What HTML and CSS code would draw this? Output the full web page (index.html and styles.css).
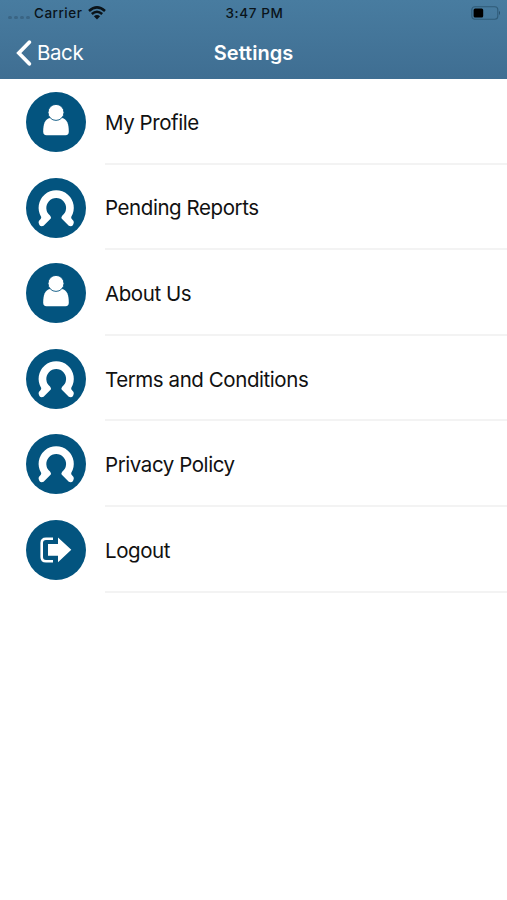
FILE: index.html
```html
<!DOCTYPE html>
<html lang="en">
<head>
    <meta charset="UTF-8">
    <meta name="viewport" content="width=device-width, initial-scale=1.0">
    <title>Settings</title>
    <link rel="stylesheet" href="styles.css">
</head>
<body>
    <svg class="sprite">
        <symbol id="user" viewBox="0 0 60 60">
            <path d="M24 26C19 27 17.2 32 17.2 39.5C17.2 42.2 18.2 43.2 20.5 43.2H39.5C41.8 43.2 42.8 42.2 42.8 39.5C42.8 32 41 27 36 26Z" fill="#fff"/>
            <circle cx="30" cy="20.4" r="8" fill="#fff" stroke="#03547f" stroke-width="0.9"/>
        </symbol>
        <symbol id="outline" viewBox="0 0 60 60">
            <path d="M15.2 39A17.6 17.6 0 1 1 45.2 39Q45 40.4 46 41.2Q48.2 42.8 47.8 44.8L47 47Q46.2 48.2 44.6 48.2L42.8 47.8L35.6 40.6Q34.8 39.4 36.4 37.6A9.9 9.9 0 1 0 24 37.6Q25.6 39.4 24.8 40.6L17.6 47.8L15.8 48.2Q14.2 48.2 13.4 47L12.6 44.8Q12.2 42.8 14.4 41.2Q15.4 40.4 15.2 39Z" fill="#fff"/>
        </symbol>
        <symbol id="logout" viewBox="0 0 60 60">
            <path d="M27 18.8H20Q15.7 18.8 15.7 23V37Q15.7 41.3 20 41.3H27" fill="none" stroke="#fff" stroke-width="2.6"/>
            <path d="M22 24H32V17.5L45.3 29.7L32 42.2V35.8H22Z" fill="#fff"/>
        </symbol>
    </svg>
    <header class="header">
        <div class="status">
            <div class="carrier">
                <span class="dots"><i></i><i></i><i></i><i></i></span>
                <span class="carrier-name">Carrier</span>
                <svg class="wifi" viewBox="0 0 18 14">
                    <path d="M1 5Q9 -2.2 17 5M3.8 8Q9 3.4 14.2 8" fill="none" stroke="#0a1319" stroke-width="2.5"/>
                    <path d="M5.9 10.3Q9 7.6 12.1 10.3L9 13.5Z" fill="#0a1319"/>
                </svg>
            </div>
            <span class="time">3:47 PM</span>
            <svg class="battery" viewBox="0 0 30 14">
                <rect x="0.8" y="0.8" width="26" height="12.4" rx="3" fill="none" stroke="#2f5b78" stroke-width="1.1"/>
                <rect x="2.6" y="2.4" width="9.6" height="9.2" rx="1.5" fill="#000"/>
                <path d="M28 4.8Q30 7 28 9.2Z" fill="#274f6a"/>
            </svg>
        </div>
        <div class="navbar">
            <a class="back">
                <svg class="chevron" viewBox="0 0 16 26">
                    <path d="M13.3 2.2L2.8 13L13.3 23.8" fill="none" stroke="#fff" stroke-width="3.7" stroke-linecap="round"/>
                </svg>
                <span class="back-text">Back</span>
            </a>
            <h1 class="title">Settings</h1>
        </div>
    </header>
    <ul class="list">
        <li class="item">
            <svg class="icon"><use href="#user"/></svg>
            <div class="label">My Profile</div>
        </li>
        <li class="item">
            <svg class="icon"><use href="#outline"/></svg>
            <div class="label">Pending Reports</div>
        </li>
        <li class="item">
            <svg class="icon"><use href="#user"/></svg>
            <div class="label">About Us</div>
        </li>
        <li class="item">
            <svg class="icon"><use href="#outline"/></svg>
            <div class="label">Terms and Conditions</div>
        </li>
        <li class="item">
            <svg class="icon"><use href="#outline"/></svg>
            <div class="label">Privacy Policy</div>
        </li>
        <li class="item">
            <svg class="icon"><use href="#logout"/></svg>
            <div class="label">Logout</div>
        </li>
    </ul>
</body>
</html>
```
FILE: styles.css
```css
body {
    margin: 0;
    background: #fff;
    font-family: Inter, "Liberation Sans", sans-serif;
    color: #111;
}
.sprite {
    display: none;
}
.header {
    height: 79px;
    background: linear-gradient(#487ca0, #3f6e92);
}
.status {
    display: grid;
    grid-template-columns: 1fr auto 1fr;
    align-items: center;
    height: 26px;
    padding: 0 6px 0 8px;
    font-size: 13.5px;
    font-weight: 500;
    color: #0a1319;
}
.carrier {
    display: flex;
    align-items: center;
}
.dots {
    display: flex;
    gap: 2px;
    width: 26px;
    padding-top: 8px;
}
.dots i {
    width: 4px;
    height: 3px;
    border-radius: 2px;
    background: #3a6584;
}
.carrier-name {
    letter-spacing: 0.5px;
}
.time {
    letter-spacing: 0.6px;
}
.wifi {
    width: 18px;
    height: 14px;
    margin-left: 6px;
}
.battery {
    width: 30px;
    height: 14px;
    justify-self: end;
}
.navbar {
    display: grid;
    grid-template-columns: 1fr auto 1fr;
    align-items: center;
    height: 53px;
    padding: 0 16px;
    color: #fff;
}
.back {
    display: flex;
    align-items: center;
    gap: 5px;
    font-size: 20.5px;
    letter-spacing: -0.4px;
}
.chevron {
    width: 16px;
    height: 26px;
}
.title {
    margin: 0;
    font-size: 20px;
    font-weight: 600;
}
.list {
    margin: 0;
    padding: 0;
    list-style: none;
}
.item {
    display: flex;
    height: 85.6px;
    padding-left: 26px;
}
.icon {
    width: 60px;
    height: 60px;
    margin: 13px 19px 0 0;
    border-radius: 50%;
    background: #03547f;
    flex-shrink: 0;
}
.label {
    display: flex;
    flex: 1;
    align-items: center;
    box-sizing: border-box;
    padding-top: 3px;
    border-bottom: 2px solid #f3f3f3;
    font-size: 20.5px;
    letter-spacing: -0.43px;
}
```
